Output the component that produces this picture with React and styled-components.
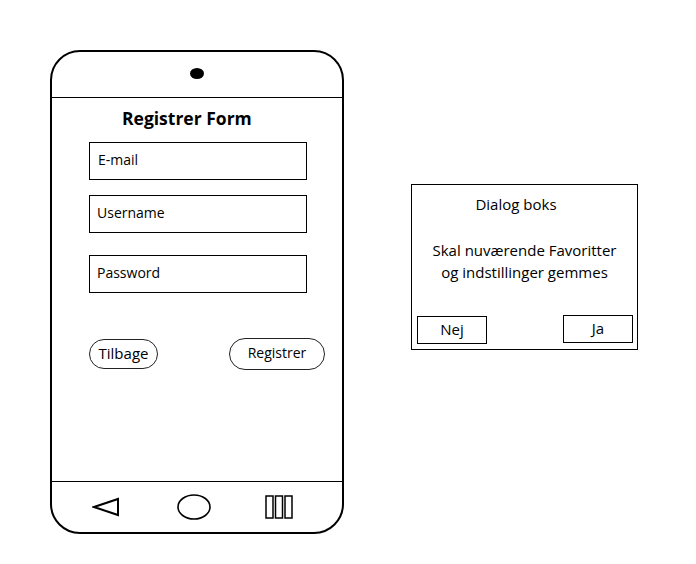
import React from 'react';
import styled, { createGlobalStyle } from 'styled-components';

const Global = createGlobalStyle`
  body {
    margin: 0;
    background: #fff;
    font-family: 'Open Sans', 'Noto Sans', sans-serif;
    color: #000;
  }
`;

const Page = styled.div`
  display: flex;
  align-items: flex-start;
  padding: 50px 0 0 50px;
  width: 696px;
  height: 564px;
  box-sizing: border-box;
`;

const Phone = styled.div`
  width: 294px;
  height: 484px;
  box-sizing: border-box;
  border: 2px solid #000;
  border-radius: 30px;
  display: flex;
  flex-direction: column;
`;

const Header = styled.div`
  height: 45px;
  border-bottom: 1px solid #000;
  display: flex;
  align-items: center;
  justify-content: center;
`;

const Camera = styled.div`
  width: 14px;
  height: 11px;
  border-radius: 50%;
  background: #000;
  margin-top: -2px;
`;

const Content = styled.div`
  flex: 1;
  display: flex;
  flex-direction: column;
  padding: 8px 0 0 37px;
`;

const Title = styled.h1`
  margin: 0 0 12px 33px;
  font-size: 17.5px;
  font-weight: 700;
  line-height: 24px;
`;

const Field = styled.div`
  width: 218px;
  height: 38px;
  box-sizing: border-box;
  border: 1px solid #000;
  display: flex;
  align-items: center;
  padding: 0 0 3px ${(p) => p.$pad || 8}px;
  margin-top: ${(p) => p.$top}px;
  font-size: 14px;
`;

const ButtonRow = styled.div`
  display: flex;
  align-items: center;
  justify-content: space-between;
  width: 236px;
  margin-top: 45px;
`;

const Pill = styled.div`
  width: ${(p) => p.$w}px;
  height: ${(p) => p.$h}px;
  box-sizing: border-box;
  border: 1.6px solid #222;
  border-radius: 999px;
  display: flex;
  align-items: center;
  justify-content: center;
  padding-bottom: ${(p) => p.$pb || 2}px;
  font-size: ${(p) => p.$fs || 14}px;
`;

const Footer = styled.div`
  height: 50px;
  border-top: 1px solid #000;
  display: flex;
  align-items: center;
  padding-left: 40px;
`;

const NavIcon = styled.svg`
  display: block;
  margin-left: ${(p) => p.$ml}px;
`;

const Dialog = styled.div`
  margin: 134px 0 0 67px;
  width: 227px;
  height: 166px;
  box-sizing: border-box;
  border: 1px solid #000;
  display: flex;
  flex-direction: column;
  align-items: center;
`;

const DialogTitle = styled.div`
  margin: 9px 17px 0 0;
  font-size: 15px;
  line-height: 20px;
`;

const DialogText = styled.div`
  margin-top: 25px;
  font-size: 15px;
  line-height: 22px;
  text-align: center;
`;

const DialogActions = styled.div`
  margin-top: auto;
  margin-bottom: 5px;
  width: 100%;
  box-sizing: border-box;
  padding: 0 4px 0 5px;
  display: flex;
  justify-content: space-between;
  align-items: flex-end;
`;

const DialogButton = styled.div`
  width: 70px;
  height: 28px;
  box-sizing: border-box;
  border: 1px solid #000;
  display: flex;
  align-items: center;
  justify-content: center;
  padding-bottom: 2px;
  margin-bottom: ${(p) => p.$mb || 0}px;
  font-size: 15px;
`;

export default function App() {
  return (
    <Page>
      <Global />
      <Phone>
        <Header>
          <Camera />
        </Header>
        <Content>
          <Title>Registrer Form</Title>
          <Field $top={0}>E-mail</Field>
          <Field $top={15} $pad={7}>Username</Field>
          <Field $top={22} $pad={7}>Password</Field>
          <ButtonRow>
            <Pill $w={69} $h={30} $fs={15}>Tilbage</Pill>
            <Pill $w={96} $h={32} $pb={4}>Registrer</Pill>
          </ButtonRow>
        </Content>
        <Footer>
          <NavIcon width="28" height="20" viewBox="0 0 28 20" $ml={0}>
            <polygon points="2,10 26,2 26,18" fill="none" stroke="#000" strokeWidth="2" strokeLinejoin="miter" />
          </NavIcon>
          <NavIcon width="34" height="26" viewBox="0 0 34 26" $ml={57}>
            <ellipse cx="17" cy="13" rx="16" ry="12" fill="none" stroke="#000" strokeWidth="1.6" />
          </NavIcon>
          <NavIcon width="28" height="24" viewBox="0 0 28 24" $ml={54}>
            <rect x="1" y="1" width="7" height="22" fill="none" stroke="#000" strokeWidth="1.5" />
            <rect x="10.5" y="1" width="7" height="22" fill="none" stroke="#000" strokeWidth="1.5" />
            <rect x="20" y="1" width="7" height="22" fill="none" stroke="#000" strokeWidth="1.5" />
          </NavIcon>
        </Footer>
      </Phone>
      <Dialog>
        <DialogTitle>Dialog boks</DialogTitle>
        <DialogText>
          Skal nuværende Favoritter
          <br />
          og indstillinger gemmes
        </DialogText>
        <DialogActions>
          <DialogButton>Nej</DialogButton>
          <DialogButton $mb={1}>Ja</DialogButton>
        </DialogActions>
      </Dialog>
    </Page>
  );
}
